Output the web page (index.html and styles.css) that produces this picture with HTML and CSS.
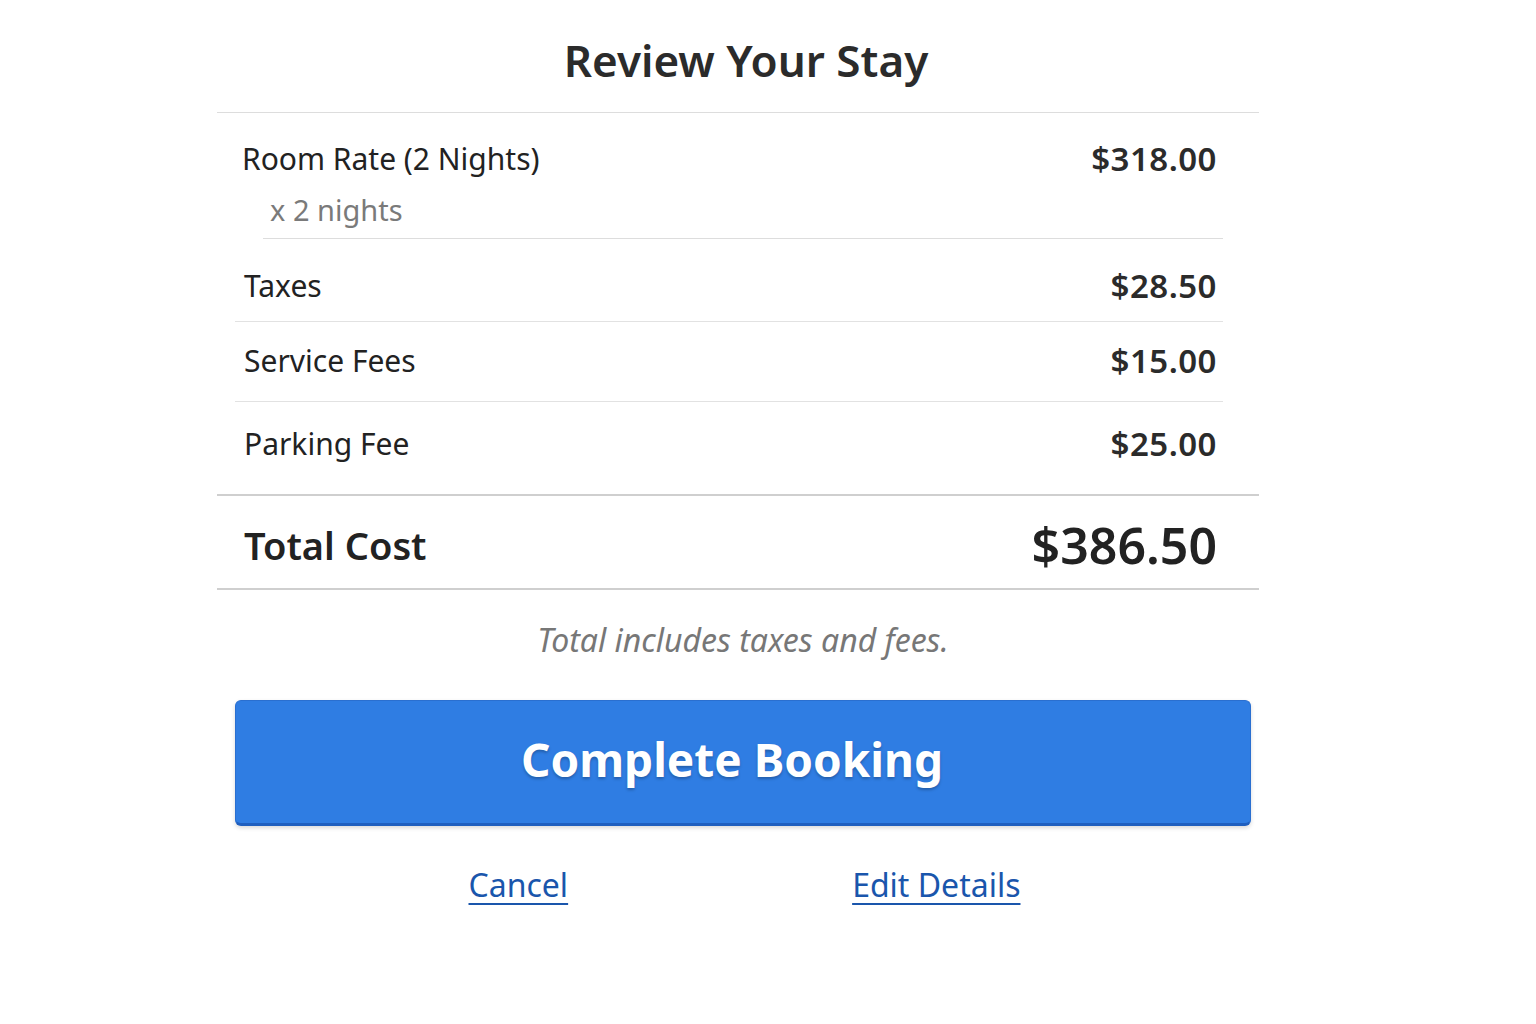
FILE: index.html
```html
<!DOCTYPE html>
<html>
	<head>
		<title>Review Your Stay</title>
		<link rel="stylesheet" href="styles.css">
	</head>
	<body>
	<div class="review">
		<h1 class="title">Review Your Stay</h1>
		<div class="items">
			<div class="room">
				<div class="row-main">
					<span class="label">Room Rate (2 Nights)</span>
					<span class="price">$318.00</span>
				</div>
				<div class="sub">x 2 nights</div>
			</div>
			<div class="row first">
				<span class="label">Taxes</span>
				<span class="price">$28.50</span>
			</div>
			<div class="row">
				<span class="label">Service Fees</span>
				<span class="price">$15.00</span>
			</div>
			<div class="row last">
				<span class="label">Parking Fee</span>
				<span class="price">$25.00</span>
			</div>
		</div>
		<div class="total">
			<span class="total-label">Total Cost</span>
			<span class="total-price">$386.50</span>
		</div>
		<p class="note">Total includes taxes and fees.</p>
		<button class="book" type="button">Complete Booking</button>
		<div class="links">
			<a href="#">Cancel</a>
			<a href="#">Edit Details</a>
		</div>
	</div>
	</body>
</html>
```

FILE: styles.css
```css
body {
	margin: 0;
	background: #fff;
	font-family: "Noto Sans", "Open Sans", sans-serif;
	color: #222;
}
.review {
	width: 1042px;
	margin-left: 217px;
}
.title {
	margin: 0;
	padding: 32px 0 24px 16px;
	font-size: 44px;
	line-height: 56px;
	font-weight: 600;
	text-align: center;
	color: #2b2b2b;
	border-bottom: 1px solid #ddd;
}
.items {
	padding: 0 36px 0 18px;
}
.row-main, .row {
	display: flex;
	justify-content: space-between;
	align-items: center;
}
.label {
	font-size: 30px;
	line-height: 34px;
	color: #222;
}
.price {
	font-size: 33px;
	line-height: 34px;
	font-weight: 600;
	letter-spacing: 0.5px;
	color: #2b2b2b;
	padding-right: 6px;
}
.room {
	padding-top: 29px;
}
.room .label {
	margin-left: 7px;
}
.sub {
	margin: 17px 0 0 28px;
	padding: 0 0 11px 7px;
	font-size: 29px;
	line-height: 34px;
	color: #7a7a7a;
	border-bottom: 1px solid #ddd;
}
.row {
	padding: 22px 0 23px;
	border-bottom: 1px solid #e2e2e2;
}
.row .label {
	margin-left: 9px;
}
.row.first {
	padding: 30px 0 18px;
}
.row.last {
	padding: 25px 0 33px;
	border-bottom: none;
}
.total {
	display: flex;
	justify-content: space-between;
	align-items: center;
	padding: 21px 42px 15px 27px;
	border-top: 2px solid #cfcfcf;
	border-bottom: 2px solid #cfcfcf;
}
.total-label {
	font-size: 38px;
	line-height: 56px;
	font-weight: 600;
	color: #222;
}
.total-price {
	font-size: 50px;
	line-height: 56px;
	font-weight: 600;
	color: #222;
}
.note {
	margin: 30px 0 0;
	font-size: 32px;
	line-height: 40px;
	font-style: italic;
	color: #777;
	text-align: center;
	padding-left: 10px;
}
.book {
	display: block;
	width: 1016px;
	height: 126px;
	margin: 40px 8px 0 18px;
	padding: 0 22px 6px 0;
	background: #2f7de3;
	border: 1px solid #2a6fd0;
	border-bottom: 3px solid #1f5fbf;
	border-radius: 6px;
	box-shadow: 0 2px 4px rgba(0, 0, 0, 0.15);
	color: #fff;
	font-family: "Noto Sans", "Open Sans", sans-serif;
	font-size: 46px;
	font-weight: 700;
	text-shadow: 0 2px 3px rgba(0, 0, 0, 0.25);
	cursor: pointer;
}
.links {
	display: flex;
	justify-content: center;
	gap: 284px;
	margin-top: 39px;
	padding-left: 13px;
}
.links a {
	font-size: 32px;
	line-height: 40px;
	color: #1a56ac;
	text-decoration: underline;
	text-decoration-thickness: 2px;
	text-underline-offset: 6px;
}
```
